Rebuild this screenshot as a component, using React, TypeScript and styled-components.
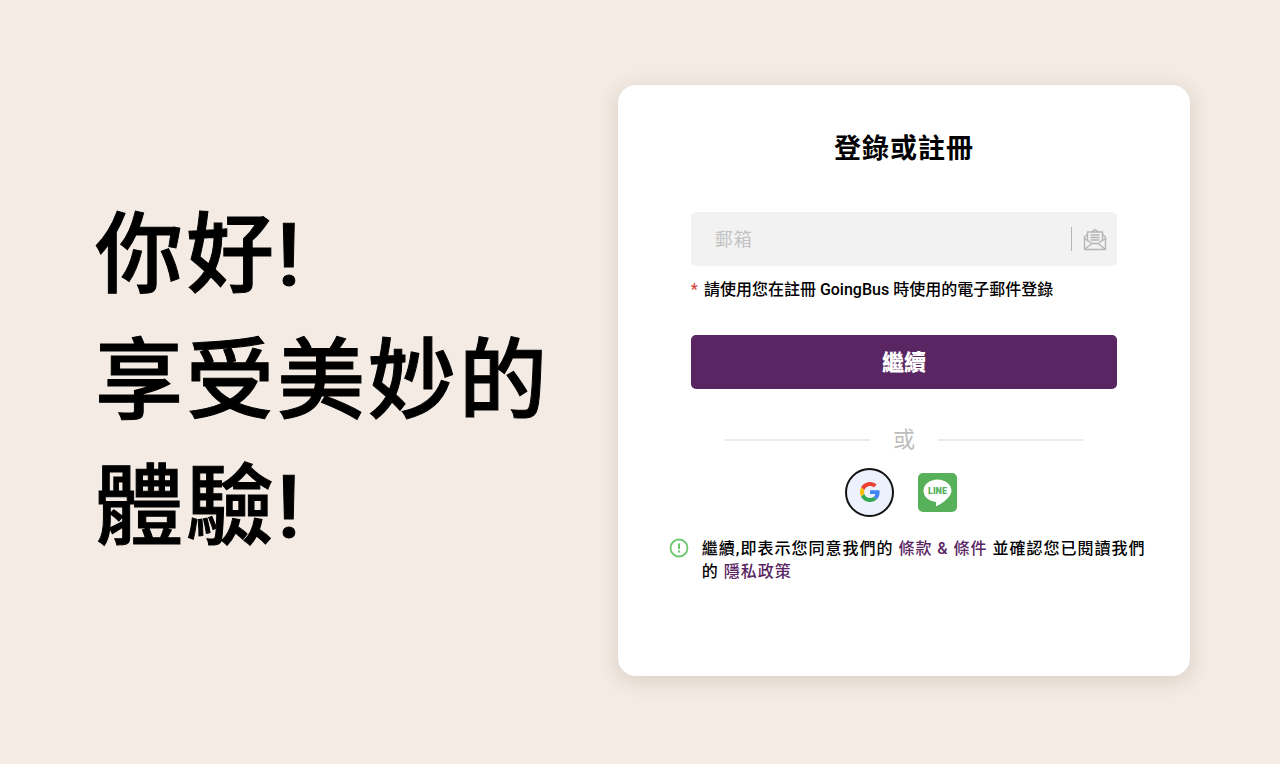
import React from "react";
import styled, { createGlobalStyle } from "styled-components";

const GlobalStyle = createGlobalStyle`
  *, *::before, *::after { box-sizing: border-box; }
  body {
    margin: 0;
    background: #f3ebe4;
    color: #000;
    font-family: Roboto, "Noto Sans CJK TC", sans-serif;
  }
`;

const Page = styled.main`
  display: grid;
  grid-template-columns: 5fr 6fr;
  gap: 46px;
  align-items: center;
  min-height: 100vh;
  padding: 20px 90px 23px 95px;

  @media (max-width: 1100px) {
    grid-template-columns: 1fr;
    padding: 32px;
  }
`;

const Greeting = styled.h1`
  margin: 0;
  font-size: 88px;
  line-height: 126px;
  font-weight: 500;
  letter-spacing: 3px;
  -webkit-text-stroke: 1px #000;
`;

const Card = styled.section`
  padding: 44px 40px 93px 51px;
  border-radius: 18px;
  background: #fff;
  box-shadow: 0 4px 20px rgba(110, 90, 60, 0.2);
`;

const LoginForm = styled.form`
  padding: 0 33px 0 22px;
`;

const Title = styled.h2`
  margin: 0 0 43px;
  font-size: 27px;
  line-height: 40px;
  font-weight: 700;
  letter-spacing: 1px;
  text-align: center;
`;

const Field = styled.div`
  display: flex;
  align-items: center;
  height: 54px;
  padding: 0 10px 0 24px;
  border-radius: 5px;
  background: #f2f2f2;
`;

const EmailInput = styled.input`
  flex: 1;
  min-width: 0;
  padding: 0;
  border: 0;
  outline: 0;
  background: transparent;
  color: #000;
  font: inherit;
  font-size: 18px;
  letter-spacing: 1px;

  &::placeholder {
    color: #c2c2c2;
    opacity: 1;
  }
`;

const FieldIcon = styled.span`
  display: flex;
  padding-left: 11px;
  border-left: 1px solid #b5b5b5;
  color: #b5b5b5;
`;

const Hint = styled.label`
  display: block;
  margin: 12px 0 34px;
  font-size: 16px;
  line-height: 23px;
  font-weight: 500;
`;

const Required = styled.span`
  margin-right: 6px;
  color: #d9453a;
`;

const SubmitButton = styled.button`
  display: block;
  width: 100%;
  height: 54px;
  padding: 0 0 4px;
  border: 0;
  border-radius: 5px;
  background: #592663;
  color: #fff;
  font: inherit;
  font-size: 22px;
  font-weight: 900;
  cursor: pointer;
`;

const Divider = styled.div`
  display: flex;
  align-items: center;
  gap: 23px;
  margin: 36px 33px 12px;
  color: #bdbdbd;
  font-size: 22px;
  line-height: 30px;

  &::before,
  &::after {
    content: "";
    flex: 1;
    height: 2px;
    background: #ececec;
  }
`;

const SocialRow = styled.div`
  display: flex;
  justify-content: center;
  align-items: center;
  gap: 24px;
  height: 50px;
  padding-right: 5px;
`;

const SocialButton = styled.button<{ $round?: boolean }>`
  display: grid;
  place-items: center;
  width: ${(p) => (p.$round ? 49 : 39)}px;
  height: ${(p) => (p.$round ? 49 : 39)}px;
  padding: 0;
  border: ${(p) => (p.$round ? "2px solid #111" : "0")};
  border-radius: ${(p) => (p.$round ? "50%" : "5px")};
  background: ${(p) => (p.$round ? "#ecf1fd" : "#56b15a")};
  cursor: pointer;
`;

const Terms = styled.div`
  display: flex;
  align-items: flex-start;
  gap: 13px;
  margin-top: 20px;

  svg {
    flex: none;
    margin-top: 1px;
  }
`;

const TermsText = styled.p`
  margin: 0;
  font-size: 16px;
  line-height: 23px;
  font-weight: 500;
  letter-spacing: 1px;
`;

const TermsLink = styled.a`
  color: #592663;
  text-decoration: none;
`;

const MailIcon = () => (
  <svg width="24" height="24" viewBox="0 0 24 24" fill="none" stroke="currentColor" strokeWidth="1.4" strokeLinejoin="round" strokeLinecap="round" aria-hidden="true">
    <path d="M4.500 7.500 1.500 10v11.500c0 .6.4 1 1 1h19c.6 0 1-.4 1-1V10l-3-2.500" />
    <path d="M4.500 13.500V5h15v8.500M8.500 5 12 2.500 15.500 5" />
    <path d="M1.500 11.500 9 16.500h6l7.500-5M2 22l7-5.500M22 22l-7-5.500" />
    <path d="M8 8h8M8 10.500h8M8 13h8" />
  </svg>
);

const GoogleIcon = () => (
  <svg width="20" height="20" viewBox="0 0 48 48" aria-hidden="true">
    <path fill="#EA4335" d="M24 9.500c3.540 0 6.710 1.220 9.210 3.600l6.850-6.850C35.900 2.380 30.470 0 24 0 14.620 0 6.510 5.380 2.560 13.220l7.980 6.190C12.430 13.720 17.740 9.500 24 9.500z" />
    <path fill="#4285F4" d="M46.980 24.550c0-1.570-.15-3.090-.38-4.550H24v9.020h12.940c-.58 2.960-2.260 5.480-4.780 7.180l7.730 6c4.510-4.180 7.090-10.360 7.090-17.650z" />
    <path fill="#FBBC05" d="M10.530 28.590c-.48-1.450-.76-2.990-.76-4.590s.27-3.140.76-4.590l-7.980-6.190C.92 16.460 0 20.120 0 24c0 3.880.92 7.540 2.560 10.780l7.970-6.190z" />
    <path fill="#34A853" d="M24 48c6.480 0 11.930-2.130 15.890-5.810l-7.730-6c-2.150 1.450-4.920 2.300-8.160 2.300-6.260 0-11.570-4.220-13.470-9.910l-7.980 6.190C6.510 42.620 14.620 48 24 48z" />
  </svg>
);

const LineIcon = () => (
  <svg width="39" height="39" viewBox="0 0 39 39" aria-hidden="true">
    <path fill="#fff" d="M19.500 6.500C11.800 6.500 5.500 11.500 5.500 17.700c0 5.500 4.900 10.200 11.600 11.100 1.300.3 1.200.9.900 2.700-.1.700-.3 2 .9 1.500 3-1.400 14.600-8.500 14.600-15.300 0-6.200-6.300-11.200-14-11.200z" />
    <text x="19.500" y="21" textAnchor="middle" fill="#56b15a" fontFamily="Roboto, sans-serif" fontSize="9" fontWeight="900">LINE</text>
  </svg>
);

const AlertIcon = () => (
  <svg width="20" height="20" viewBox="0 0 20 20" fill="none" stroke="#6bc96e" aria-hidden="true">
    <circle cx="10" cy="10" r="8.500" strokeWidth="1.800" />
    <path d="M10 5.500v5.500M10 12.500v2" strokeWidth="2" />
  </svg>
);

export default function App() {
  return (
    <>
      <GlobalStyle />
      <Page>
        <Greeting lang="zh-Hant">
          你好!
          <br />
          享受美妙的體驗!
        </Greeting>
        <Card lang="zh-Hant">
          <LoginForm onSubmit={(e) => e.preventDefault()}>
            <Title>登錄或註冊</Title>
            <Field>
              <EmailInput id="email" type="email" placeholder="郵箱" />
              <FieldIcon>
                <MailIcon />
              </FieldIcon>
            </Field>
            <Hint htmlFor="email">
              <Required>*</Required>請使用您在註冊 GoingBus 時使用的電子郵件登錄
            </Hint>
            <SubmitButton type="submit">繼續</SubmitButton>
            <Divider>或</Divider>
            <SocialRow>
              <SocialButton type="button" $round aria-label="Google">
                <GoogleIcon />
              </SocialButton>
              <SocialButton type="button" aria-label="LINE">
                <LineIcon />
              </SocialButton>
            </SocialRow>
          </LoginForm>
          <Terms>
            <AlertIcon />
            <TermsText>
              繼續,即表示您同意我們的 <TermsLink href="#terms">條款 &amp; 條件</TermsLink> 並確認您已閱讀我們的{" "}
              <TermsLink href="#privacy">隱私政策</TermsLink>
            </TermsText>
          </Terms>
        </Card>
      </Page>
    </>
  );
}
